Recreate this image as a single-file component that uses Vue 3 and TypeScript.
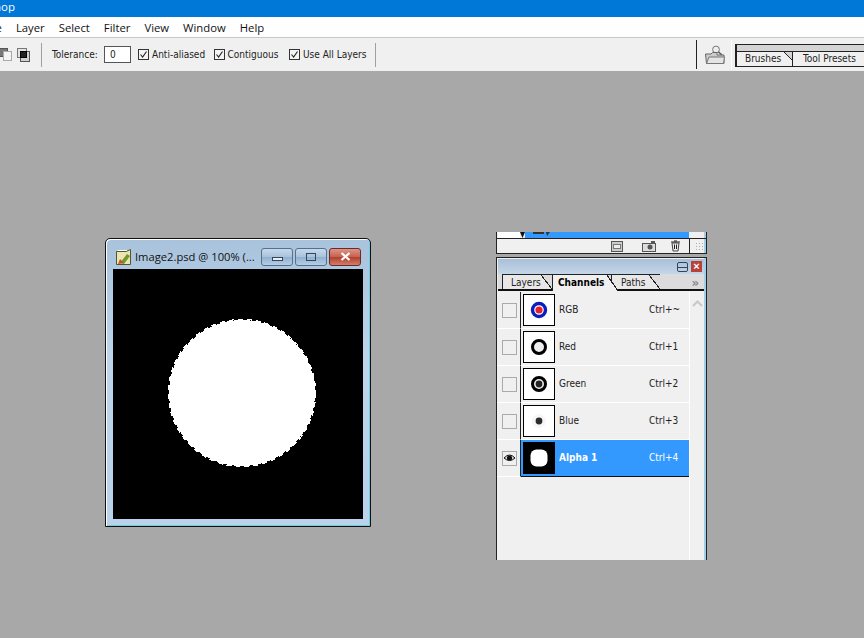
<template>
  <div class="app">
    <div class="titlebar"><span class="title-clip"><span>Adobe Photoshop</span></span></div>

    <nav class="menubar">
      <span v-for="item in menus" :key="item">{{ item }}</span>
    </nav>

    <div class="toolbar">
      <div class="modes">
        <svg width="32" height="18" viewBox="0 0 32 18">
          <rect x="-1.5" y="2.5" width="9" height="8" fill="#777" stroke="#555" />
          <rect x="3.5" y="5.5" width="8" height="9" fill="#f4f4f4" stroke="#aaa" />
          <rect x="17.5" y="2.5" width="9" height="9" fill="#e4e4e4" stroke="#777" />
          <rect x="20.5" y="5.5" width="9" height="10" fill="#d0d0d0" stroke="#555" />
          <rect x="20.5" y="5.5" width="6" height="6" fill="#222" stroke="#000" />
        </svg>
      </div>
      <i class="sep"></i>
      <label class="tolerance">Tolerance:</label>
      <span class="input">0</span>
      <span v-for="c in checks" :key="c" class="check">
        <svg width="11" height="11" viewBox="0 0 11 11">
          <rect x="0.5" y="0.5" width="10" height="10" fill="#f4f4f4" stroke="#333" />
          <path d="M2.5 5.5 L4.6 8 L8.5 2.5" fill="none" stroke="#222" stroke-width="1.1" />
        </svg>
        {{ c }}
      </span>
      <i class="sep"></i>
      <div class="right-tools">
        <i class="sep dark"></i>
        <svg class="folder" width="22" height="20" viewBox="0 0 22 20">
          <circle cx="12" cy="4.5" r="3.4" fill="#eee" stroke="#777" />
          <path d="M14.5 7 L18 10" stroke="#555" stroke-width="1.6" />
          <path d="M2.5 18.5 L1.5 9 H7 L8.5 7.5 H13 V10 H20 V18.5 Z" fill="#ccc" stroke="#666" />
          <path d="M2.5 18.5 L5 12 H20.5 L19.5 18.5 Z" fill="#e4e4e4" stroke="#777" />
        </svg>
        <i class="sep light"></i>
        <div class="well">
          <div class="well-tab first">Brushes</div>
          <div class="well-tab">Tool Presets</div>
        </div>
      </div>
    </div>

    <main class="canvas">
      <section class="doc">
        <header class="doc-head">
          <svg class="doc-icon" width="17" height="18" viewBox="0 0 17 18">
            <path d="M1.5 3.5 H11 L15.5 1.5 V16.5 H1.5 Z" fill="#e9e6b4" stroke="#55542c" />
            <path d="M2.5 2.5 H12" stroke="#fff" />
            <path d="M5 15 L12 6 L15 8 L9 16 Z" fill="#74972f" />
            <path d="M3 16 L5 11 L9 15 Z" fill="#b8562c" />
          </svg>
          <span class="doc-title">Image2.psd @ 100% (...</span>
          <div class="win-buttons">
            <button class="wb"><i class="min"></i></button>
            <button class="wb"><i class="max"></i></button>
            <button class="wb close">
              <svg width="11" height="9" viewBox="0 0 11 9">
                <path d="M1.5 1 L9.5 8 M9.5 1 L1.5 8" stroke="#fff" stroke-width="2.2" />
              </svg>
            </button>
          </div>
        </header>
        <svg class="doc-image" width="250" height="250" viewBox="0 0 250 250" shape-rendering="crispEdges">
          <rect width="250" height="250" fill="#000" />
          <circle cx="129" cy="124" r="73" fill="#fff" />
          <circle cx="129" cy="124" r="73.6" fill="none" stroke="#fff" stroke-width="1.2" stroke-dasharray="5 4" />
        </svg>
      </section>

      <section class="panel-stub">
        <div class="stub-row">
          <div class="stub-eye"></div>
          <svg class="stub-arrow" width="5" height="6" viewBox="0 0 5 6"><path d="M0 0 H5 L2.5 6 Z" fill="#111" /></svg>
          <div class="stub-blue">
            <svg width="18" height="5" viewBox="0 0 18 5">
              <path d="M1 0 H12 V2 H1 Z M14 0 H18 L15 4 Z" fill="#333" />
            </svg>
          </div>
        </div>
        <div class="stub-foot">
          <svg width="12" height="11" viewBox="0 0 12 11">
            <rect x="0.5" y="0.5" width="11" height="10" fill="#ccc" stroke="#555" />
            <rect x="2.5" y="3.5" width="7" height="4" fill="#eee" stroke="#777" />
          </svg>
          <svg width="14" height="11" viewBox="0 0 14 11">
            <rect x="0.5" y="2.5" width="13" height="8" fill="#ddd" stroke="#555" />
            <circle cx="8" cy="6" r="2.5" fill="#555" />
            <rect x="9" y="0" width="4" height="2" fill="#555" />
          </svg>
          <svg width="11" height="12" viewBox="0 0 11 12">
            <path d="M2 3 H9 L8 11 H3 Z" fill="#eee" stroke="#444" />
            <path d="M1 2 H10 M4 1 H7 M4.5 4.5 V9 M6.5 4.5 V9" stroke="#222" />
          </svg>
          <i class="stub-sep"></i>
          <span class="grip"></span>
        </div>
      </section>

      <section class="panel">
        <header class="panel-head">
          <i class="p-min"></i>
          <i class="p-close">×</i>
        </header>
        <div class="tabs">
          <span class="tab t-layers">Layers</span>
          <span class="tab active">Channels</span>
          <span class="tab t-paths">Paths</span>
          <span class="more">»</span>
        </div>
        <div class="panel-body">
          <div class="rows">
            <div v-for="ch in channels" :key="ch.name" class="row" :class="{ selected: ch.selected }">
              <div class="eye">
                <span class="eye-box">
                  <svg v-if="ch.selected" width="13" height="10" viewBox="0 0 13 10">
                    <path d="M1 5 Q6.5 -1 12 5 Q6.5 10 1 5 Z" fill="#ddd" stroke="#111" />
                    <circle cx="6.5" cy="5" r="2.6" fill="#111" />
                  </svg>
                </span>
              </div>
              <div class="line-cell">
                <svg class="thumb" width="32" height="32" viewBox="0 0 32 32">
                  <rect x="0.5" y="0.5" width="31" height="31" :fill="ch.selected ? '#000' : '#fff'" stroke="#000" />
                  <template v-if="ch.name === 'RGB'">
                    <circle cx="16" cy="16" r="6.5" fill="#fff" stroke="#0a1fbe" stroke-width="3.4" />
                    <circle cx="16" cy="16" r="3.6" fill="#e8202a" />
                  </template>
                  <template v-else-if="ch.name === 'Red'">
                    <circle cx="16" cy="16" r="6.5" fill="#eee" stroke="#000" stroke-width="3" />
                  </template>
                  <template v-else-if="ch.name === 'Green'">
                    <circle cx="16" cy="16" r="6.5" fill="#eee" stroke="#000" stroke-width="3" />
                    <circle cx="16" cy="16" r="3.4" fill="#222" />
                  </template>
                  <template v-else-if="ch.name === 'Blue'">
                    <circle cx="16" cy="16" r="7" fill="#f6f6f6" />
                    <circle cx="16" cy="16" r="3.4" fill="#2c2c2c" />
                  </template>
                  <rect v-else x="7.5" y="7.5" width="17" height="17" rx="6" fill="#fff" />
                </svg>
                <span class="ch-name">{{ ch.name }}</span>
                <span class="ch-key">{{ ch.key }}</span>
              </div>
            </div>
          </div>
          <div class="scroll">
            <svg width="11" height="7" viewBox="0 0 11 7">
              <path d="M1 6 L5.5 1.5 L10 6" fill="none" stroke="#c8c8c8" stroke-width="2" />
            </svg>
          </div>
        </div>
      </section>
    </main>
  </div>
</template>

<script setup lang="ts">
const menus = ['File', 'Layer', 'Select', 'Filter', 'View', 'Window', 'Help']
const checks = ['Anti-aliased', 'Contiguous', 'Use All Layers']

const channels = [
  { name: 'RGB', key: 'Ctrl+~', selected: false },
  { name: 'Red', key: 'Ctrl+1', selected: false },
  { name: 'Green', key: 'Ctrl+2', selected: false },
  { name: 'Blue', key: 'Ctrl+3', selected: false },
  { name: 'Alpha 1', key: 'Ctrl+4', selected: true }
]
</script>

<style>
html, body {
  margin: 0;
  background: #a8a8a8;
  overflow: hidden;
}
</style>

<style scoped>
.app {
  width: 864px;
  height: 638px;
  display: flex;
  flex-direction: column;
  overflow: hidden;
  font-family: "DejaVu Sans", Verdana, sans-serif;
  font-stretch: condensed;
  font-size: 10px;
  color: #222;
}

.titlebar {
  height: 17px;
  background: #0078d7;
  flex: none;
}
.title-clip {
  display: flex;
  justify-content: flex-end;
  width: 15px;
  overflow: hidden;
  color: #fff;
  font: 11.5px/13px "Open Sans", sans-serif;
  white-space: nowrap;
}

.menubar {
  height: 20px;
  flex: none;
  background: #fff;
  display: flex;
  align-items: center;
  gap: 14px;
  margin-left: -16px;
  font: 11.3px "Open Sans", sans-serif;
  color: #111;
}

.toolbar {
  height: 34px;
  flex: none;
  box-sizing: border-box;
  border-top: 1px solid #c8c8c8;
  background: #f0f0f0;
  display: flex;
  align-items: center;
}
.modes {
  width: 41px;
  display: flex;
}
.sep {
  width: 1px;
  height: 24px;
  background: #a0a0a0;
  flex: none;
}
.tolerance {
  margin-left: 10px;
  width: 52px;
}
.input {
  height: 15px;
  width: 20px;
  border: 1px solid #555;
  background: #fff;
  padding-left: 5px;
  margin-right: 7px;
  line-height: 15px;
}
.check {
  display: flex;
  align-items: center;
  gap: 3px;
  width: 75.5px;
  flex: none;
  white-space: nowrap;
}
.check:last-of-type {
  width: 86px;
}
.right-tools {
  margin-left: auto;
  display: flex;
  align-items: center;
  width: 168px;
  flex: none;
}
.sep.dark {
  height: 29px;
  background: #222;
}
.folder {
  margin: 0 5px 0 7px;
  flex: none;
}
.sep.light {
  height: 29px;
  background: #fff;
  margin-right: 3px;
}
.well {
  flex: 1;
  height: 23px;
  margin-top: 1px;
  box-sizing: border-box;
  border-top: 1px solid #222;
  border-left: 2px solid #222;
  border-bottom: 1px solid #222;
  background: #d4d4d4;
  display: flex;
  align-items: flex-end;
  white-space: nowrap;
}
.well-tab {
  height: 15px;
  line-height: 14px;
  background: #f0f0f0;
  border-top: 1px solid #222;
  box-sizing: border-box;
  flex: none;
}
.well-tab.first {
  width: 55px;
  padding-left: 8px;
  background: linear-gradient(to bottom left, #d4d4d4 46%, #222 46%, #222 54%, #f0f0f0 54%) right top / 8px 8px no-repeat, #f0f0f0;
}
.well-tab:last-child {
  flex: 1;
  padding-left: 10px;
  border-left: 1px solid #222;
}

.canvas {
  flex: 1;
  position: relative;
  background: #a8a8a8;
}

.doc {
  position: absolute;
  left: 105px;
  top: 167px;
  width: 266px;
  height: 289px;
  box-sizing: border-box;
  border: 1px solid #111;
  border-radius: 5px 5px 0 0;
  background: linear-gradient(180deg, #a9c3dd 0, #bdd4ea 40%, #bad2ea 100%);
  padding: 0 7px 7px;
  display: flex;
  flex-direction: column;
  box-shadow: inset 1px 1px 0 #fff, inset -1px -1px 0 #6fcfe0;
}
.doc-head {
  height: 30px;
  box-sizing: border-box;
  padding: 5px 0 0 2px;
  display: flex;
  align-items: center;
  gap: 3px;
  flex: none;
}
.doc-icon {
  flex: none;
}
.doc-title {
  font: 11.2px "Open Sans", sans-serif;
  color: #111;
  white-space: nowrap;
}
.win-buttons {
  margin-left: auto;
  display: flex;
  gap: 2px;
  margin-right: 2px;
}
.wb {
  width: 32px;
  height: 18px;
  padding: 0;
  border: 1px solid #56708c;
  border-radius: 3px;
  background: linear-gradient(180deg, #c6d9ec 0, #a8c2dc 50%, #8fb0d0 51%, #b5cde4 100%);
  display: flex;
  align-items: center;
  justify-content: center;
}
.wb i {
  display: block;
  box-sizing: border-box;
  background: #e8eef4;
  border: 1px solid #33465a;
}
.wb .min {
  width: 11px;
  height: 4px;
  margin-top: 5px;
}
.wb .max {
  width: 10px;
  height: 8px;
  border-width: 1.5px;
  background: transparent;
}
.wb.close {
  border-color: #6d2a20;
  background: linear-gradient(180deg, #dc9488 0, #c8604e 50%, #b03f2e 51%, #d07e6c 100%);
}
.doc-image {
  display: block;
  flex: none;
}

.panel-stub {
  position: absolute;
  left: 496px;
  top: 161px;
  width: 211px;
  height: 22px;
  box-sizing: border-box;
  border: solid #222;
  border-width: 0 1px 1px;
  background: #f0f0f0;
  box-shadow: inset -2px 0 0 #a4cfe8;
  overflow: hidden;
}
.stub-row {
  height: 7px;
  box-sizing: border-box;
  display: flex;
  border-bottom: 1px solid #222;
}
.stub-eye {
  width: 22px;
  flex: none;
  margin-left: 1px;
  background: #fff;
}
.stub-arrow {
  flex: none;
}
.stub-blue {
  width: 164px;
  background: #3399ff;
  padding-left: 7px;
  box-sizing: border-box;
  line-height: 0;
}
.stub-foot {
  height: 14px;
  display: flex;
  align-items: center;
  padding-left: 114px;
}
.stub-foot svg {
  flex: none;
}
.stub-foot svg:nth-child(1) {
  margin-right: 19px;
}
.stub-foot svg:nth-child(2) {
  margin-right: 14px;
}
.stub-foot svg:nth-child(3) {
  margin-right: 8px;
}
.stub-sep {
  width: 1px;
  height: 14px;
  background: #222;
  flex: none;
}
.grip {
  width: 9px;
  height: 8px;
  margin-left: 5px;
  background: radial-gradient(circle, #aaa 1px, transparent 1px) 0 0 / 3px 3px;
}

.panel {
  position: absolute;
  left: 496px;
  top: 186px;
  width: 211px;
  height: 303px;
  box-sizing: border-box;
  border: solid #222;
  border-width: 1px 1px 0;
  background: #f0f0f0;
  box-shadow: inset -2px 0 0 #a4cfe8;
  display: flex;
  flex-direction: column;
}
.panel-head {
  height: 15px;
  flex: none;
  margin: 1px 2px 0 1px;
  background: linear-gradient(180deg, #a8c0d8, #c4d6e8);
  display: flex;
  align-items: center;
  justify-content: flex-end;
  gap: 3px;
  padding-right: 2px;
}
.p-min {
  width: 11px;
  height: 10px;
  box-sizing: border-box;
  border: 1px solid #33465a;
  border-radius: 2px;
  background: linear-gradient(180deg, transparent 4px, #33465a 4px, #33465a 5px, transparent 5px);
}
.p-close {
  width: 11px;
  height: 11px;
  background: #b8413a;
  color: #fff;
  font: bold 11px/10px "Liberation Sans", sans-serif;
  text-align: center;
}
.tabs {
  height: 17px;
  flex: none;
  margin: 0 2px 0 1px;
  box-sizing: border-box;
  border-bottom: 2px solid #111;
  background: #dcdcdc;
  display: flex;
  align-items: flex-end;
  padding-left: 4px;
}
.tab {
  --tab-fill: #e8e8e8;
  position: relative;
  height: 15px;
  line-height: 15px;
  box-sizing: border-box;
  border-left: 1px solid #222;
  border-top: 1px solid #222;
  background: linear-gradient(var(--tab-fill), var(--tab-fill)) left top / calc(100% - 11px) 100% no-repeat,
    linear-gradient(to bottom left, transparent 47%, #222 47%, #222 53%, var(--tab-fill) 53%) right top / 11px 100% no-repeat;
}
.t-layers {
  width: 50px;
  padding-left: 8px;
}
.tab.active {
  --tab-fill: #f0f0f0;
  width: 66px;
  padding-left: 5px;
  height: 17px;
  margin-bottom: -2px;
  font-weight: 700;
  color: #000;
  z-index: 1;
}
.t-paths {
  width: 49px;
  margin-left: -7px;
  padding-left: 9px;
}
.more {
  margin-left: auto;
  margin-right: 5px;
  color: #888;
  font-size: 13px;
  line-height: 13px;
  font-weight: 700;
}
.panel-body {
  flex: 1;
  display: flex;
  min-height: 0;
  margin-right: 2px;
  padding-top: 1px;
}
.rows {
  width: 192px;
  flex: none;
}
.row {
  height: 37px;
  display: flex;
  box-sizing: border-box;
}
.eye {
  width: 24px;
  flex: none;
  box-sizing: border-box;
  border-bottom: 1px solid #fff;
  border-right: 1px solid #222;
  padding-left: 2px;
  display: flex;
  align-items: center;
  justify-content: center;
}
.eye-box {
  width: 15px;
  height: 15px;
  box-sizing: border-box;
  border: 1px solid #aaa;
  display: flex;
  align-items: center;
  justify-content: center;
}
.line-cell {
  flex: 1;
  display: flex;
  align-items: center;
  padding-left: 2px;
  box-sizing: border-box;
  border-bottom: 1px solid #fff;
}
.thumb {
  flex: none;
}
.ch-name {
  margin-left: 4px;
  width: 90px;
  margin-top: -2px;
}
.ch-key {
  color: #222;
  margin-top: -2px;
}
.row.selected .line-cell {
  background: #3399ff;
  color: #fff;
  border-bottom: 1px solid #111;
}
.row.selected .ch-name {
  font-weight: 700;
}
.row.selected .ch-key {
  color: #fff;
}
.scroll {
  flex: 1;
  border-left: 1px solid #fff;
  display: flex;
  justify-content: center;
  align-items: flex-start;
  padding-top: 8px;
}
</style>
